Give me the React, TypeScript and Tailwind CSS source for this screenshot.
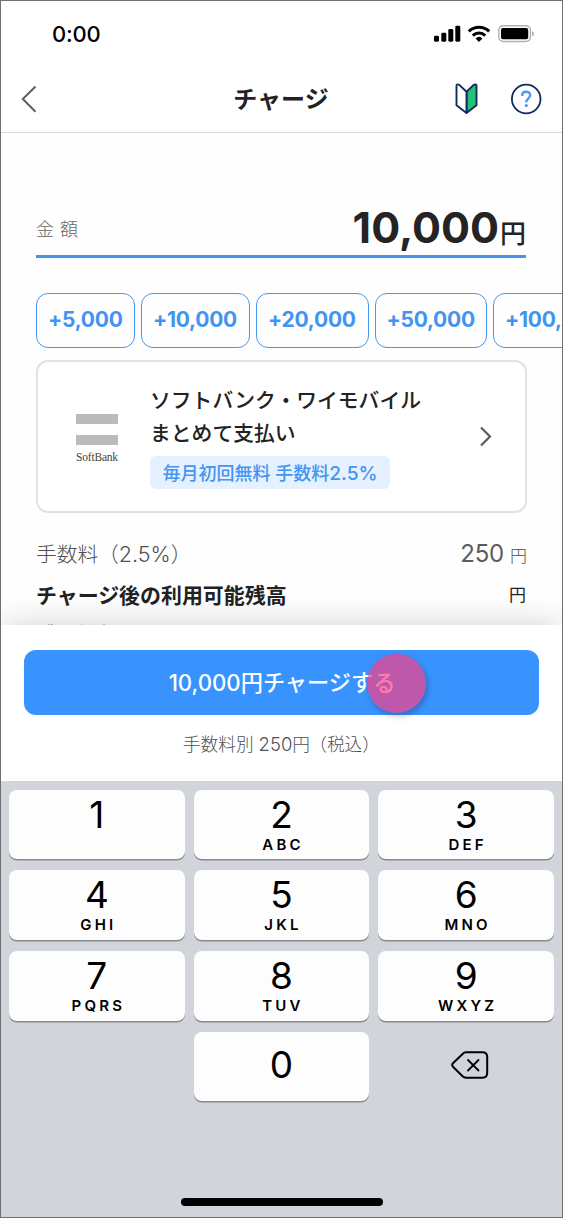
import type { ReactNode } from 'react';

const KEYS = [
  ['1', ''],
  ['2', 'ABC'],
  ['3', 'DEF'],
  ['4', 'GHI'],
  ['5', 'JKL'],
  ['6', 'MNO'],
  ['7', 'PQRS'],
  ['8', 'TUV'],
  ['9', 'WXYZ'],
];

const AMOUNTS = [
  { label: '+5,000', width: 'w-[99px]' },
  { label: '+10,000', width: 'w-[109px]' },
  { label: '+20,000', width: 'w-[112.5px]' },
  { label: '+50,000', width: 'w-[112.5px]' },
  { label: '+100,000', width: 'w-[126px]' },
];

function StatusBar() {
  return (
    <div className="flex h-[64px] items-start justify-between pl-[51px] pr-[28px]">
      <span className="mt-[18px] text-[22px] leading-[30px] font-medium tracking-[-0.2px] text-black">0:00</span>
      <svg className="mt-[23px]" width="101" height="20" viewBox="433 24 101 20">
        <rect x="434" y="35.7" width="5" height="6" rx="1.4" />
        <rect x="441.3" y="32.7" width="5" height="9" rx="1.4" />
        <rect x="448.3" y="29" width="5" height="12.7" rx="1.4" />
        <rect x="455.3" y="25.7" width="5" height="16" rx="1.4" />
        <g fill="none" stroke="#000" strokeWidth="3">
          <path d="M468.8 31.4a14.6 14.6 0 0 1 20.4 0" />
          <path d="M472.8 35.6a8.8 8.8 0 0 1 12.4 0" />
        </g>
        <path d="M479 41.9l-3.4-3.5a5 5 0 0 1 6.8 0z" />
        <rect x="498.8" y="25.7" width="31.6" height="15.8" rx="4.4" fill="#fff" stroke="#b0b0b0" strokeWidth="1.4" />
        <rect x="501" y="28" width="27.2" height="11.3" rx="2" />
        <path d="M532 31.2c2.6 1.2 2.6 3.8 0 5z" fill="#b0b0b0" />
      </svg>
    </div>
  );
}

function Header() {
  return (
    <header className="flex h-[68px] items-center border-b border-[#dadada] pl-[19px] pr-[20px]">
      <div className="flex w-[160px]">
        <svg width="18" height="30" viewBox="20 84 18 30" fill="none" stroke="#606060" strokeWidth="2">
          <path d="M35.5 86.5L22.8 99l12.7 12.7" />
        </svg>
      </div>
      <h1 className="flex-1 pt-[2px] text-center text-[24px] font-bold text-[#222]">チャージ</h1>
      <div className="flex w-[160px] justify-end gap-[32px]">
        <svg width="23" height="32" viewBox="455 83 23 32" strokeLinejoin="round" stroke="#0f2b63" strokeWidth="1.9">
          <path d="M466.5 91.8l7.2-6.9c1.4-1 2.8-.6 2.8.8v19.6l-10 7.7z" fill="#25c275" />
          <path d="M466.5 91.8l-7.2-6.9c-1.4-1-2.8-.6-2.8.8v19.6l10 7.7z" fill="#fff" />
        </svg>
        <svg width="32" height="32" viewBox="510 83 32 32" fill="none">
          <circle cx="526.2" cy="99" r="14.3" stroke="#0f2b63" strokeWidth="1.8" />
          <path d="M522.2 96v-.8c0-2.4 1.8-3.5 4-3.5s4 1.4 4 3.6c0 3.2-4 3.4-4 6.9" stroke="#4a9af4" strokeWidth="2.4" />
          <circle cx="526.3" cy="105.5" r="1.6" fill="#4a9af4" />
        </svg>
      </div>
    </header>
  );
}

function AmountButton({ label, width }: { label: string; width: string }) {
  return (
    <button
      className={`${width} h-[55px] shrink-0 rounded-[12px] border-[1.5px] border-[#4796f0] pb-[2px] pl-[11px] text-left text-[21px] leading-none font-bold tracking-[-0.25px] text-[#4294f0]`}
    >
      {label}
    </button>
  );
}

function Key({ children }: { children: ReactNode }) {
  return (
    <button className="flex flex-col items-center rounded-[8px] bg-[#fdfdfe] text-black shadow-[0_1.5px_0_#898a8d]">
      {children}
    </button>
  );
}

function Keypad() {
  return (
    <div className="flex h-[436px] flex-col items-center bg-[#d1d4db] px-[8px] pt-[9px]">
      <div className="grid w-full grid-cols-3 grid-rows-[69px_70px_70px_69px] gap-x-[9px] gap-y-[11px]">
        {KEYS.map(([digit, letters]) => (
          <Key key={digit}>
            <span className="mt-[4px] text-[37px] leading-[42px]">{digit}</span>
            <span className="h-[17px] pl-[3px] text-[15px] leading-[17px] font-semibold tracking-[3.2px]">{letters}</span>
          </Key>
        ))}
        <span />
        <Key>
          <span className="mt-[12px] text-[37px] leading-[42px]">0</span>
        </Key>
        <div className="flex items-center justify-center pb-[4px] pl-[8px]">
          <svg width="40" height="30" viewBox="450 1050 40 30" fill="none" stroke="#000" strokeWidth="2" strokeLinejoin="round">
            <path d="M466 1052.3h16.5q4.7 0 4.7 4.7v16q0 4.7-4.7 4.7H466q-2 0-3.400-1.400l-9.400-9.300q-2-2 0-4l9.400-8.900q1.400-1.800 3.400-1.800z" />
            <path d="M468 1060l10.5 10.500M478.500 1060L468 1070.500" strokeLinecap="round" strokeWidth="1.8" />
          </svg>
        </div>
      </div>
      <div className="mt-[97px] h-[8px] w-[202px] rounded-full bg-black" />
    </div>
  );
}

export default function App() {
  return (
    <div className="flex h-[1218px] w-[563px] flex-col overflow-hidden border border-[#6f6f71] bg-white font-['Inter','Noto_Sans_CJK_JP',sans-serif]">
      <StatusBar />
      <Header />
      <main className="h-[492px] overflow-hidden bg-[#fefefe] pt-[66px]">
        <div className="mr-[36px] ml-[35px] flex h-[59px] items-center justify-between border-b-[3px] border-[#4795eb]">
          <span className="mt-[4px] text-[18px] font-light tracking-[6px] text-[#666]">金額</span>
          <div className="flex items-baseline text-[#252324]">
            <span className="mr-[1px] text-[43px] leading-[54px] font-bold">10,000</span>
            <span className="text-[26px] leading-none font-medium">円</span>
          </div>
        </div>
        <div className="mt-[35px] flex gap-[6px] overflow-hidden pl-[35px]">
          {AMOUNTS.map((a) => (
            <AmountButton key={a.label} {...a} />
          ))}
        </div>
        <section className="mx-[35px] mt-[12px] flex h-[153px] items-start rounded-[12px] border-2 border-[#e2e2e4] bg-white">
          <div className="mt-[52px] ml-[38px] flex w-[42px] flex-col items-center">
            <div className="h-[10px] w-[42px] bg-[#bbbbbc]" />
            <div className="mt-[11px] h-[10px] w-[42px] bg-[#bbbbbc]" />
            <span className="mt-[5px] font-['Liberation_Serif',serif] text-[11.5px] leading-[15px] tracking-[-0.2px] text-[#444]">
              SoftBank
            </span>
          </div>
          <div className="mt-[22px] ml-[32px] flex flex-col items-start">
            <p className="text-[20.8px] leading-[33px] font-medium whitespace-nowrap text-[#222]">
              ソフトバンク・ワイモバイル
              <br />
              まとめて支払い
            </p>
            <span className="mt-[6px] flex h-[33px] w-[240px] items-center justify-center rounded-[6px] bg-[#e5f1fe] pt-[2px] text-[18px] font-medium whitespace-nowrap text-[#4494f0]">
              <span>毎月初回無料 手数料</span>
              <span className="text-[19.2px]">2.5%</span>
            </span>
          </div>
          <svg className="mt-[64px] ml-[57px]" width="14" height="22" viewBox="478 426 14 22" fill="none" stroke="#5c5c5e" strokeWidth="2.2">
            <path d="M481 427.5l9 9-9 9" />
          </svg>
        </section>
        <div className="mx-[35px] mt-[20px] flex h-[42px] items-center justify-between text-[20.8px] font-light text-[#505050]">
          <span className="[font-feature-settings:'halt']">
            <span className="mr-[10px]">手数料</span>（<span className="text-[21.5px]">2.5%</span>）
          </span>
          <span className="flex items-baseline gap-[6px]">
            <span className="text-[24px] leading-none font-normal tracking-[-0.2px] text-[#5c5c5c]">250</span>
            <span className="text-[17px] leading-none">円</span>
          </span>
        </div>
        <div className="mr-[36px] ml-[35px] flex h-[42px] items-center justify-between text-[20.95px] font-bold text-[#222]">
          <span>チャージ後の利用可能残高</span>
          <span className="text-[17px] font-normal">円</span>
        </div>
        <div className="mx-[35px] text-[20.8px] leading-[35px] font-light text-[#777]">残高総額</div>
      </main>
      <section className="relative flex h-[156px] shrink-0 flex-col items-center bg-white pt-[25px] shadow-[0_0_32px_-2px_rgba(0,0,0,0.2)]">
        <button className="h-[65px] w-[515px] rounded-[12px] bg-[#3993ff] pl-[1px] text-[22.2px] font-medium text-white">
          10,000円チャージする
        </button>
        <p className="mt-[15px] -ml-[9px] text-[17.7px] leading-[28px] font-light whitespace-nowrap text-[#505050] [font-feature-settings:'halt']">
          手数料別 <span className="text-[18.5px]">250</span>
          <span className="mr-[8px]">円</span>（税込）
        </p>
        <span className="absolute top-[29px] left-[366px] h-[59px] w-[59px] rounded-full bg-[#fe3c82]/68 shadow-[2px_3px_6px_rgba(0,0,0,0.25)]" />
      </section>
      <div className="relative">
        <Keypad />
      </div>
    </div>
  );
}
